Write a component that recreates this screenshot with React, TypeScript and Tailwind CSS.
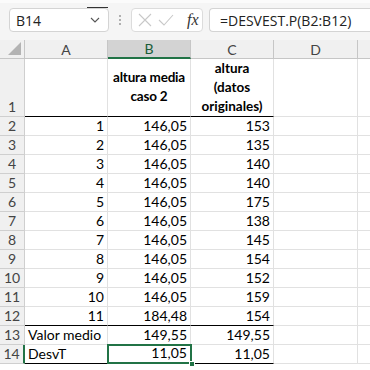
import React from 'react';

const rows: [string, string, string, string][] = [
  ['2', '1', '146,05', '153'],
  ['3', '2', '146,05', '135'],
  ['4', '3', '146,05', '140'],
  ['5', '4', '146,05', '140'],
  ['6', '5', '146,05', '175'],
  ['7', '6', '146,05', '138'],
  ['8', '7', '146,05', '145'],
  ['9', '8', '146,05', '154'],
  ['10', '9', '146,05', '152'],
  ['11', '10', '146,05', '159'],
  ['12', '11', '184,48', '154'],
];

const cellFont = { fontFamily: 'Lato, "Noto Sans", sans-serif' };
const uiFont = { fontFamily: '"Open Sans", "Noto Sans", sans-serif' };

const Cell = ({ children, className = '' }: { children?: React.ReactNode; className?: string }) => (
  <div className={`h-full border-r border-b border-[#e1e1e1] text-[14px] leading-[18px] text-black px-[3px] flex items-end ${className}`}>
    {children}
  </div>
);

const RowHead = ({ children, className = '' }: { children?: React.ReactNode; className?: string }) => (
  <div className={`h-full bg-[#f0f0f0] border-r border-b border-[#cfcfcf] text-[14px] leading-[18px] text-[#444] flex items-end justify-center ${className}`}>
    {children}
  </div>
);

export default function App() {
  return (
    <div className="w-[370px] h-[370px] overflow-hidden bg-white" style={cellFont}>
      {/* formula bar */}
      <div className="relative h-[40px] bg-[#f5f5f5] border-t-[3px] border-[#fbfbfb] flex items-start pt-[5px] pl-[9px] gap-0">
        <div className="relative w-[100px] h-[24px] bg-white border border-[#d4d4d4] rounded-[4px] flex items-center pl-[6px] text-[14px] text-[#222]" style={uiFont}>
          B14
          <span className="absolute -top-[2px] left-[77px] w-[21px] h-[1px] bg-[#333]" />
          <svg className="absolute right-[8px] top-[8px]" width="10" height="6" viewBox="0 0 10 6">
            <path d="M1 1 L5 5 L9 1" fill="none" stroke="#555" strokeWidth="1.1" />
          </svg>
        </div>
        <div className="w-[22px] h-[24px] flex flex-col items-center justify-center gap-[2px]">
          <span className="w-[2px] h-[2px] bg-[#999] rounded-full" />
          <span className="w-[2px] h-[2px] bg-[#999] rounded-full" />
          <span className="w-[2px] h-[2px] bg-[#999] rounded-full" />
        </div>
        <div className="w-[72px] h-[24px] bg-white border border-[#dcdcdc] rounded-[4px] flex items-center pl-[6px]">
          <svg width="14" height="14" viewBox="0 0 14 14">
            <path d="M1 1 L13 13 M13 1 L1 13" stroke="#c8c8c8" strokeWidth="1.1" />
          </svg>
          <svg className="ml-[6px]" width="16" height="12" viewBox="0 0 16 12">
            <path d="M1 6 L6 11 L15 1" fill="none" stroke="#c8c8c8" strokeWidth="1.1" />
          </svg>
          <span className="ml-[13px] text-[16px] italic text-[#333]" style={{ fontFamily: '"Liberation Serif", serif' }}>
            fx
          </span>
        </div>
        <div className="ml-[6px] flex-1 h-[24px] bg-white border border-[#d4d4d4] border-r-0 rounded-l-[4px] flex items-center pl-[10px] text-[14px] text-[#222]" style={uiFont}>
          =DESVEST.P(B2:B12)
        </div>
      </div>

      {/* grid */}
      <div className="grid grid-cols-[25px_83px_83px_83px_84px_12px] grid-rows-[19px_58px_repeat(13,19px)]">
        {/* column headers */}
        <div className="relative bg-[#f0f0f0] border-r border-b border-[#c6c6c6]">
          <svg className="absolute right-[3px] bottom-[3px]" width="13" height="13" viewBox="0 0 13 13">
            <path d="M13 0 L13 13 L0 13 Z" fill="#b3b3b3" />
          </svg>
        </div>
        <div className="bg-[#f0f0f0] border-r border-b border-[#c6c6c6] text-[14px] text-[#444] flex items-center justify-center">A</div>
        <div className="bg-[#d3d3d3] border-r border-[#c6c6c6] border-b-2 border-b-[#217346] text-[14px] text-[#185c37] flex items-center justify-center">B</div>
        <div className="bg-[#f0f0f0] border-r border-b border-[#c6c6c6] text-[14px] text-[#444] flex items-center justify-center">C</div>
        <div className="bg-[#f0f0f0] border-r border-b border-[#c6c6c6] text-[14px] text-[#444] flex items-center justify-center">D</div>
        <div className="bg-[#f0f0f0] border-b border-[#c6c6c6]" />

        {/* row 1 */}
        <RowHead>1</RowHead>
        <Cell className="border-b-black" />
        <div className="h-full border-r border-[#e1e1e1] border-b border-b-black flex items-center justify-center text-center font-bold text-black pb-[2px]">
          <span className="whitespace-nowrap text-[13.5px] leading-[19px] tracking-[-0.2px]">altura media<br />caso 2</span>
        </div>
        <Cell className="border-b-black justify-center text-center font-bold">
          <span className="leading-[19px] text-[13.5px]">altura<br />(datos<br />originales)</span>
        </Cell>
        <Cell />
        <Cell className="border-r-0" />

        {rows.map(([n, a, b, c]) => {
          const last = n === '12';
          const bb = last ? 'border-b-black' : '';
          return (
            <React.Fragment key={n}>
              <RowHead>{n}</RowHead>
              <Cell className={`justify-end ${bb}`}>{a}</Cell>
              <Cell className={`justify-end ${bb}`}>{b}</Cell>
              <Cell className={`justify-end ${bb}`}>{c}</Cell>
              <Cell />
              <Cell className="border-r-0" />
            </React.Fragment>
          );
        })}

        {/* row 13 */}
        <RowHead>13</RowHead>
        <Cell>Valor medio</Cell>
        <Cell className="justify-end">149,55</Cell>
        <Cell className="justify-end">149,55</Cell>
        <Cell />
        <Cell className="border-r-0" />

        {/* row 14 */}
        <RowHead className="bg-[#d3d3d3] text-[#185c37] border-r-2 border-r-[#217346]">14</RowHead>
        <Cell className="border-b-black">DesvT</Cell>
        <div className="relative h-full border-b border-black">
          <div className="absolute -left-[1px] -top-[1px] -right-[1px] -bottom-[1px] border-2 border-[#217346] flex items-end justify-end px-[3px] text-[14px] leading-[18px] text-black">
            11,05
          </div>
          <span className="absolute -right-[4px] -bottom-[4px] w-[6px] h-[6px] bg-[#217346] border border-white" />
        </div>
        <Cell className="border-b-black justify-end">11,05</Cell>
        <Cell />
        <Cell className="border-r-0" />
      </div>
    </div>
  );
}
